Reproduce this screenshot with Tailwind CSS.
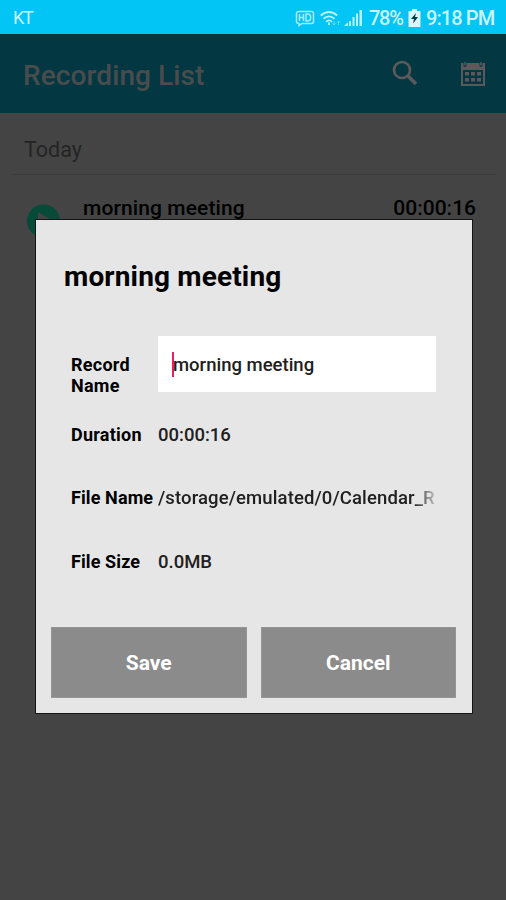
<!DOCTYPE html>
<html lang="en">
<head>
<meta charset="utf-8">
<title>Recording List</title>
<script src="https://cdn.jsdelivr.net/npm/@tailwindcss/browser@4"></script>
</head>
<body class="relative flex h-[900px] w-[506px] flex-col overflow-hidden bg-[#444444] font-['Roboto',sans-serif] text-black">
  <!-- Status bar -->
  <header class="flex h-[34px] shrink-0 items-center justify-between bg-[#02c5f5] pl-[13px] pr-[11px] pt-[2px] text-[#c9f4fd]">
    <span class="text-[18px] leading-none tracking-[-1.2px]">KT</span>
    <div class="flex items-center">
      <svg class="mr-[5px] h-[17px] w-[20px]" viewBox="0 0 20 17" fill="none" stroke="#a5edfc" stroke-width="1.5">
        <path d="M4 1.5h12.500q2 0 2 2v8q0 2-2 2H7l-3 2v-2q-2.500 0-2.500-2v-8q0-2 2.500-2z"/>
        <path d="M4.500 4v7M8.500 4v7M4.500 7.500h4M11 4v7h1.500q3.200 0 3.200-3.500T12.500 4z"/>
      </svg>
      <svg class="mr-[3px] h-[17px] w-[21px]" viewBox="0 0 21 17" fill="none" stroke="#bff3fd" stroke-width="1.8">
        <path d="M0.800 5.500Q9 -1.500 17.200 5.500M3.500 8.800Q9 4 14.500 8.800M6 11.800Q9 9 12 11.800"/>
        <path d="M9 12.500v2.500" stroke-width="2"/>
        <path d="M14 11v4m-1.500-1.500L14 15l1.500-1.500M18.500 15v-4m-1.500 1.500l1.500-1.500 1.500 1.500" stroke="#66dcf9" stroke-width="1"/>
      </svg>
      <svg class="mr-[7px] h-[18px] w-[18px]" viewBox="0 0 18 18" fill="#b7f1fd">
        <path d="M0 17l4-4v4zM5 12h2v5H5zM8.500 8h2v9h-2zM12 4.500h2V17h-2zM15.500 1H18v16h-2.500z"/>
      </svg>
      <span class="mr-[5px] w-[34px] text-[20px] font-medium leading-none tracking-[-1.300px]">78%</span>
      <svg class="mr-[5px] h-[18px] w-[13px]" viewBox="0 0 13 18">
        <path d="M4 0h5v2h3.500v16H0.500V2H4z" fill="#d8f8ff"/>
        <path d="M8 4L3 10h3l-1 4.500L10 8H7z" fill="#063642"/>
      </svg>
      <span class="w-[69px] whitespace-nowrap text-[20px] font-medium leading-none tracking-[-0.900px]">9:18 PM</span>
    </div>
  </header>

  <!-- Dimmed app bar -->
  <div class="flex h-[79px] shrink-0 items-center border-t border-[#003039] bg-[#033842] pl-[23px] pr-[20px]">
    <h1 class="grow pt-[3px] text-[28px] font-medium leading-none tracking-[0.1px] text-[#494c4d]">Recording List</h1>
    <svg class="mb-[3px] mr-[42px] h-[26px] w-[26px]" viewBox="0 0 26 26" fill="none" stroke="#5b595a">
      <circle cx="10" cy="10" r="8" stroke-width="2.700"/>
      <path d="M15.500 15.500l8.500 8.500" stroke-width="3.600"/>
    </svg>
    <svg class="h-[26px] w-[26px]" viewBox="0 0 26 26" fill="#5b595a">
      <path fill-rule="evenodd" d="M1 2h2.500v3q1.500 2 3 0V2h13v3q1.500 2 3 0V2H25v23H1zM3 9v14h20V9z"/>
      <path d="M4.300 1h1.500v3.500H4.300zM20.200 1h1.500v3.500h-1.500zM5 11h4v3.500H5zM11 11h4v3.500h-4zM17 11h4v3.500h-4zM5 17h4v3.500H5zM11 17h4v3.500h-4zM17 17h4v3.500h-4z"/>
    </svg>
  </div>

  <!-- Dimmed list -->
  <main class="flex grow flex-col pl-[12px] pr-[10px]">
    <h2 class="h-[62px] border-b border-[#3c3c3c] pl-[12px] pt-[25px] text-[21.500px] leading-[24px] text-[#242424]">Today</h2>
    <div class="flex pl-[15px] pr-[20px] pt-[20px]">
      <svg class="mt-[9px] h-[34px] w-[34px]" viewBox="0 0 34 34">
        <circle cx="16.500" cy="17" r="16.500" fill="#064a38"/>
        <path d="M11 8l15 9-15 9z" fill="#444444"/>
      </svg>
      <span class="ml-[22px] grow text-[21px] font-medium leading-[26px] tracking-[0.1px]">morning meeting</span>
      <span class="text-[21px] font-medium leading-[26px]">00:00:16</span>
    </div>
  </main>

  <!-- Details dialog -->
  <section class="absolute left-[35px] top-[219px] flex h-[495px] w-[438px] flex-col border border-[#151515] bg-[#e6e6e6] pb-[15px] pl-[15px] pr-[16px]">
    <h2 class="ml-[13px] mt-[41px] text-[28px] font-bold leading-[32px] tracking-[0.15px]">morning meeting</h2>
    <div class="ml-[20px] mt-[43px] grid grid-cols-[87px_278px] text-[18.500px] font-medium leading-[21px]">
      <span class="h-[79px] pt-[18px] text-[18px] font-bold tracking-[0.25px]">Record<br>Name</span>
      <div class="flex h-[56px] items-center bg-white pl-[14px]">
        <i class="h-[25px] w-[2px] bg-[#e91e63]"></i>
        <span class="ml-[-1px] pt-[2px] text-[#202020]">morning meeting</span>
      </div>
      <span class="h-[63px] pt-[9px] text-[18px] font-bold tracking-[0.25px]">Duration</span>
      <span class="pt-[10px] text-[#202020]">00:00:16</span>
      <span class="h-[63px] whitespace-nowrap pt-[9px] text-[18px] font-bold tracking-[0.1px]">File Name</span>
      <span class="overflow-hidden whitespace-nowrap pt-[10px] tracking-[0.12px] text-[#202020] mask-[linear-gradient(to_right,black_calc(100%-22px),rgba(0,0,0,0.15))]">/storage/emulated/0/Calendar_R</span>
      <span class="pt-[10px] text-[18px] font-bold tracking-[0.1px]">File Size</span>
      <span class="pt-[11px] text-[#202020]">0.0MB</span>
    </div>
    <div class="mt-auto grid h-[71px] grid-cols-2 gap-[14px] text-[21px] font-bold text-white">
      <button class="border border-[#949494] bg-[#8b8b8b] pt-[2px]">Save</button>
      <button class="border border-[#949494] bg-[#8b8b8b] pt-[2px]">Cancel</button>
    </div>
  </section>
</body>
</html>
